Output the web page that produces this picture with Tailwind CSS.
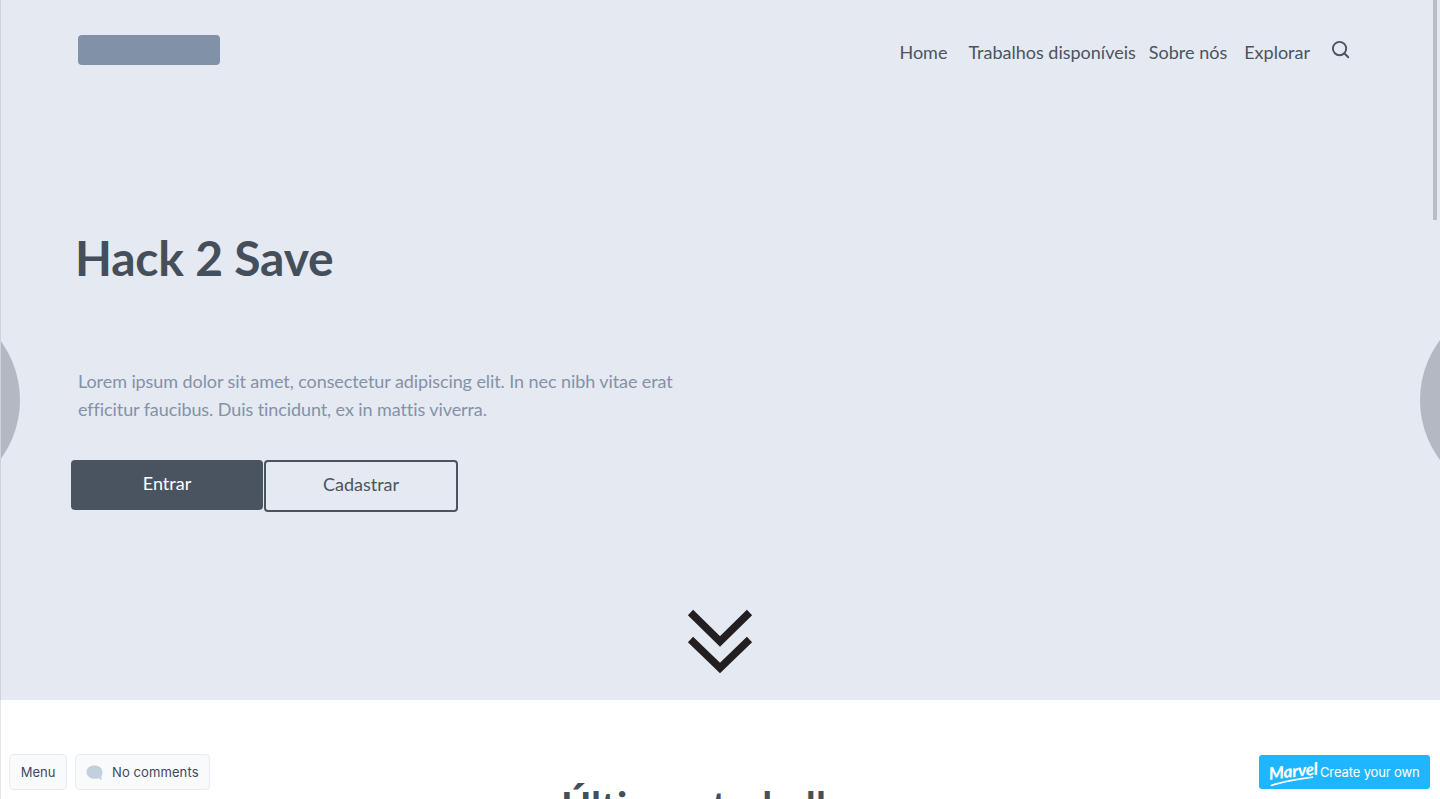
<!DOCTYPE html>
<html lang="en">
<head>
  <meta charset="UTF-8" />
  <meta name="viewport" content="width=device-width, initial-scale=1.0"/>
  <title>Hack 2 Save</title>
  <script src="https://cdn.jsdelivr.net/npm/@tailwindcss/browser@4"></script>
</head>
<body class="bg-white h-screen overflow-hidden font-['Lato',sans-serif]">
  <div class="relative h-[799px] overflow-hidden">

    <!-- Hero -->
    <section class="relative h-[700px] bg-[#e5e9f2] overflow-hidden border-l border-[#cdd3de]">
      <div class="absolute left-[-181px] top-[300px] w-[200px] h-[200px] rounded-full bg-[#b4b8c2]"></div>
      <div class="absolute left-[1419px] top-[300px] w-[200px] h-[200px] rounded-full bg-[#b4b8c2]"></div>

      <header class="flex items-start justify-between pl-[77px] pr-[90px] pt-[35px]">
        <div class="w-[142px] h-[30px] rounded-[4px] bg-[#8191a8]"></div>
        <nav class="flex items-start text-[18px] leading-[28px] text-[#4a5461] pt-[3px]">
          <a href="#">Home</a>
          <a href="#" class="ml-[21px]">Trabalhos disponíveis</a>
          <a href="#" class="ml-[13px]">Sobre nós</a>
          <a href="#" class="ml-[17px]">Explorar</a>
          <svg class="ml-[21px] mt-[2px] w-[19px] h-[19px]" viewBox="0 0 20 20" fill="none" stroke="#4a5461" stroke-width="2" stroke-linecap="round">
            <circle cx="9" cy="9" r="7"/>
            <path d="M14.2 14.2L18.2 18.2"/>
          </svg>
        </nav>
      </header>

      <h1 class="ml-[74px] mt-[162px] text-[48px] leading-[60px] font-bold tracking-[-0.2px] text-[#454f5c]">Hack 2 Save</h1>

      <p class="ml-[77px] mt-[79px] w-[620px] text-[18px] leading-[28px] tracking-[-0.085px] text-[#8492a6]">Lorem ipsum dolor sit amet, consectetur adipiscing elit. In nec nibh vitae erat efficitur faucibus. Duis tincidunt, ex in mattis viverra.</p>

      <div class="flex items-start ml-[70px] mt-[37px]">
        <a href="#" class="flex items-center justify-center w-[192px] h-[50px] pb-[3px] rounded-[4px] bg-[#4a5461] text-[18px] text-white">Entrar</a>
        <a href="#" class="flex items-center justify-center ml-px w-[194px] h-[52px] pb-[3px] rounded-[4px] border-2 border-[#4a5461] text-[18px] text-[#4a5461]">Cadastrar</a>
      </div>

      <svg class="absolute left-[685px] top-[609px] w-[68px] h-[66px]" viewBox="0 0 68 66" fill="none" stroke="#231f20" stroke-width="7.5">
        <path d="M4.5 3.5L34 32.5L63.5 3.5"/>
        <path d="M4.5 30.5L34 59L63.5 30.5"/>
      </svg>
    </section>

    <!-- Ultimos trabalhos -->
    <section class="h-[99px] pt-[82px] text-center border-l border-[#e6e6e6]">
      <h2 class="text-[40.5px] leading-[48px] font-bold text-[#454f5c]">Últimos trabalhos</h2>
    </section>

    <!-- Scrollbar -->
    <div class="absolute right-[3px] top-0 w-[4px] h-[220px] bg-[#bbbdc4]"></div>

    <!-- Marvel overlay -->
    <div class="absolute left-[9px] top-[754px] flex gap-[8px] font-['Inter',sans-serif] text-[13px] text-[#3d4a5c]">
      <button class="w-[58px] h-[36px] pt-[1px] rounded-[4px] border border-[#e8ecf1] bg-[#f8fafc]">Menu</button>
      <button class="flex items-center w-[135px] h-[36px] pl-[10px] pt-[1px] rounded-[4px] border border-[#e8ecf1] bg-[#f8fafc]">
        <svg class="w-[17px] h-[16px] mr-[9px]" viewBox="0 0 17 16" fill="#c1cfdf">
          <path d="M8.5 0.5C13 0.5 16.5 3.2 16.5 7C16.5 9.4 15.4 11 15.2 12.2L15.8 15.2L12.4 13.3C11.2 13.7 10 13.8 8.5 13.8C4 13.8 0.5 10.8 0.5 7C0.5 3.2 4 0.5 8.5 0.5Z"/>
        </svg>
        <span class="tracking-[0.1px]">No comments</span>
      </button>
    </div>
    <a href="#" class="absolute left-[1259px] top-[755px] flex items-center w-[171px] h-[34px] pl-[10px] rounded-[3px] bg-[#1fb6ff] font-['Inter',sans-serif] text-[13px] text-white">
      <span class="relative w-[51px] -rotate-6 font-['Lato',sans-serif] text-[17px] leading-[16px] font-black italic tracking-[-0.3px] pb-[3px]">Marvel
        <svg class="absolute left-0 bottom-[-2px] w-[44px] h-[6px]" viewBox="0 0 44 6" fill="none" stroke="white" stroke-width="1.6" stroke-linecap="round"><path d="M1 5C14 2 28 1.5 43 1"/></svg>
      </span>
      <span class="pt-[1px] tracking-[-0.13px]">Create your own</span>
    </a>
  </div>
</body>
</html>
